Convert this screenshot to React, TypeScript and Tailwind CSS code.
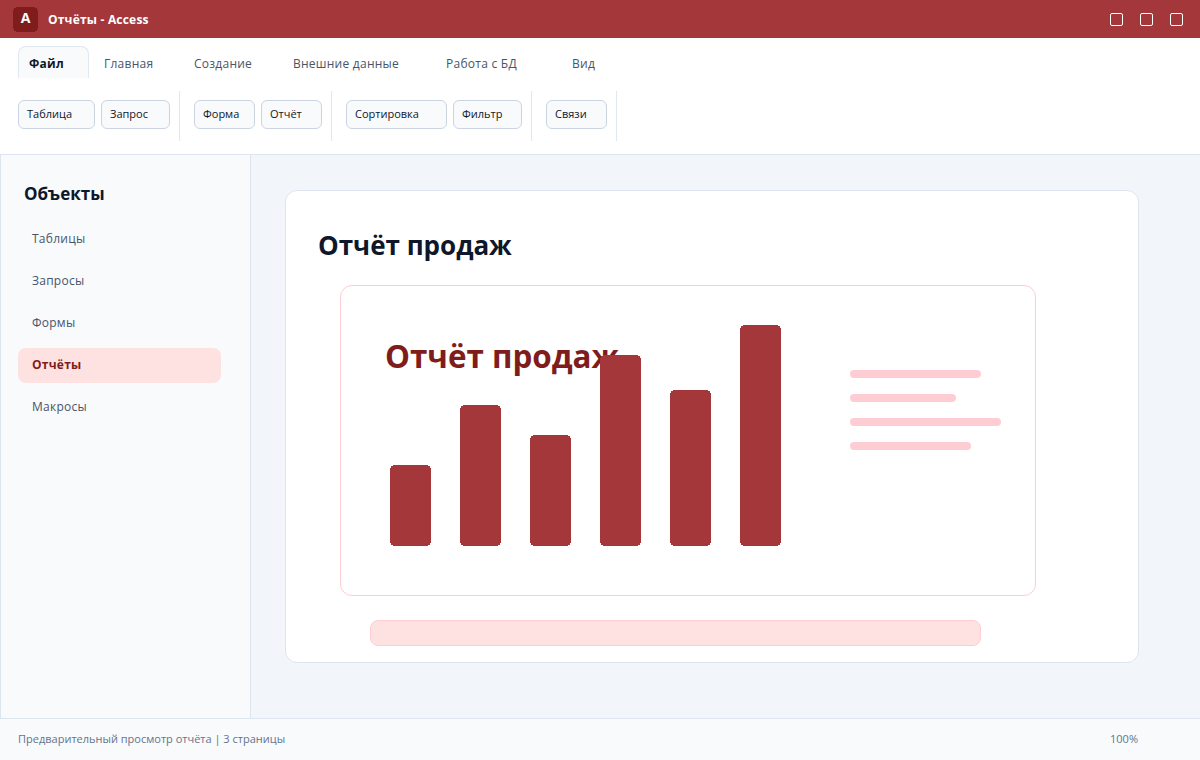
const tabs = [
  { label: 'Файл', width: 'w-[71px] mr-1', active: true },
  { label: 'Главная', width: 'w-[90px]' },
  { label: 'Создание', width: 'w-[99px]' },
  { label: 'Внешние данные', width: 'w-[153px]' },
  { label: 'Работа с БД', width: 'w-[126px]' },
  { label: 'Вид', width: 'w-[74px]' },
];

const ribbonGroups = [
  [
    { label: 'Таблица', width: 'w-[77px]' },
    { label: 'Запрос', width: 'w-[69px]' },
  ],
  [
    { label: 'Форма', width: 'w-[61px]' },
    { label: 'Отчёт', width: 'w-[61px]' },
  ],
  [
    { label: 'Сортировка', width: 'w-[101px]' },
    { label: 'Фильтр', width: 'w-[69px]' },
  ],
  [{ label: 'Связи', width: 'w-[61px]' }],
];

const objects = ['Таблицы', 'Запросы', 'Формы', 'Отчёты', 'Макросы'];
const bars = [81, 141, 111, 191, 156, 221];
const lines = ['w-[131px]', 'w-[106px]', 'w-[151px]', 'w-[121px]'];

function BarChart() {
  return (
    <svg width="391" height="221" viewBox="0 0 391 221" shapeRendering="crispEdges">
      {bars.map((h, i) => (
        <rect key={i} x={i * 70} y={221 - h} width="41" height={h} rx="5" fill="#a4373a" />
      ))}
    </svg>
  );
}

export default function App() {
  return (
    <div className="flex h-[760px] w-[1200px] flex-col overflow-hidden bg-white font-['Open_Sans',sans-serif] text-[#0f172a]">
      {/* Title bar */}
      <div className="flex h-[38px] shrink-0 items-center justify-between bg-[#a4373a] pl-[13px] pr-[17px]">
        <div className="flex items-center gap-[10px]">
          <div className="relative flex h-[25px] w-[25px] items-center justify-center text-sm font-bold text-white">
            <svg className="absolute inset-0" width="25" height="25" shapeRendering="crispEdges">
              <rect width="25" height="25" rx="5" fill="#7f1d1d" />
            </svg>
            <span className="relative -mt-[3px]">A</span>
          </div>
          <span className="mt-[2px] text-xs font-bold tracking-[0.2px] text-white">Отчёты - Access</span>
        </div>
        <div className="flex gap-[17px]">
          <div className="h-[13px] w-[13px] rounded-[2px] border border-white" />
          <div className="h-[13px] w-[13px] rounded-[2px] border border-white" />
          <div className="h-[13px] w-[13px] rounded-[2px] border border-white" />
        </div>
      </div>

      {/* Ribbon */}
      <div className="flex h-[117px] shrink-0 flex-col border-b border-[#dde5f0] bg-white pl-[18px] pt-2">
        <div className="flex h-8">
          {tabs.map((tab) => (
            <div
              key={tab.label}
              className={`flex items-center text-xs tracking-[0.25px] ${tab.width} ${
                tab.active
                  ? 'rounded-t-lg border border-b-0 border-[#e2e8f0] bg-[#f8fafc] pl-[10px] pt-[2px] font-bold text-[#0f172a]'
                  : 'pl-[11px] pt-1 text-[#475569]'
              }`}
            >
              {tab.label}
            </div>
          ))}
        </div>
        <div className="mt-[13px] flex">
          {ribbonGroups.map((group, i) => (
            <div key={i} className="mr-[14px] flex h-[50px] items-start gap-[6px] border-r border-[#e2e8f0] pr-[9px] pt-[9px]">
              {group.map((btn) => (
                <div
                  key={btn.label}
                  className={`flex h-[29px] items-center rounded-md border border-[#cbd5e1] bg-[#f8fafc] pl-2 text-[11px] ${btn.width}`}
                >
                  {btn.label}
                </div>
              ))}
            </div>
          ))}
        </div>
      </div>

      <div className="flex min-h-0 flex-1">
        {/* Objects panel */}
        <div className="w-[251px] shrink-0 border-x border-[#dde5f0] bg-[#f8fafc] pl-[17px] pr-[29px] pt-[26px]">
          <div className="mb-[15px] pl-[6px] text-[17px] leading-[26px] font-bold">Объекты</div>
          <div className="flex flex-col gap-[7px]">
            {objects.map((name) => (
              <div
                key={name}
                className={`flex h-[35px] items-center rounded-lg pb-[2px] pl-[14px] text-xs tracking-[0.25px] ${
                  name === 'Отчёты' ? 'bg-[#fee2e2] font-bold text-[#7f1d1d]' : 'text-[#475569]'
                }`}
              >
                {name}
              </div>
            ))}
          </div>
        </div>

        {/* Report area */}
        <div className="min-w-0 flex-1 bg-[#f2f6fb] pl-[34px] pt-[35px]">
          <div className="h-[473px] w-[854px] rounded-xl border border-[#dde5f0] bg-white pl-8 pt-[32px]">
            <h1 className="text-[26px] leading-[44px] font-bold">Отчёт продаж</h1>
            <div className="relative mt-[18px] ml-[22px] h-[311px] w-[696px] rounded-xl border border-[#fecdd3]">
              <div className="absolute left-11 top-[48px] text-[31.4px] leading-[44px] font-bold text-[#7f1d1d]">
                Отчёт продаж
              </div>
              <div className="absolute bottom-[49px] left-[49px] flex">
                <BarChart />
              </div>
              <div className="absolute left-[509px] top-[84px] flex flex-col gap-4">
                {lines.map((w, i) => (
                  <div key={i} className={`h-2 rounded-full bg-[#fecdd3] ${w}`} />
                ))}
              </div>
            </div>
            <div className="mt-6 ml-[52px] h-[26px] w-[611px] rounded-lg border border-[#fecdd3] bg-[#fee2e2]" />
          </div>
        </div>
      </div>

      {/* Status bar */}
      <div className="flex h-[42px] shrink-0 items-center justify-between border-t border-[#dde5f0] bg-[#f8fafc] pl-[18px] pr-[62px] text-[11px] text-[#64748b]">
        <span>Предварительный просмотр отчёта | 3 страницы</span>
        <span>100%</span>
      </div>
    </div>
  );
}
